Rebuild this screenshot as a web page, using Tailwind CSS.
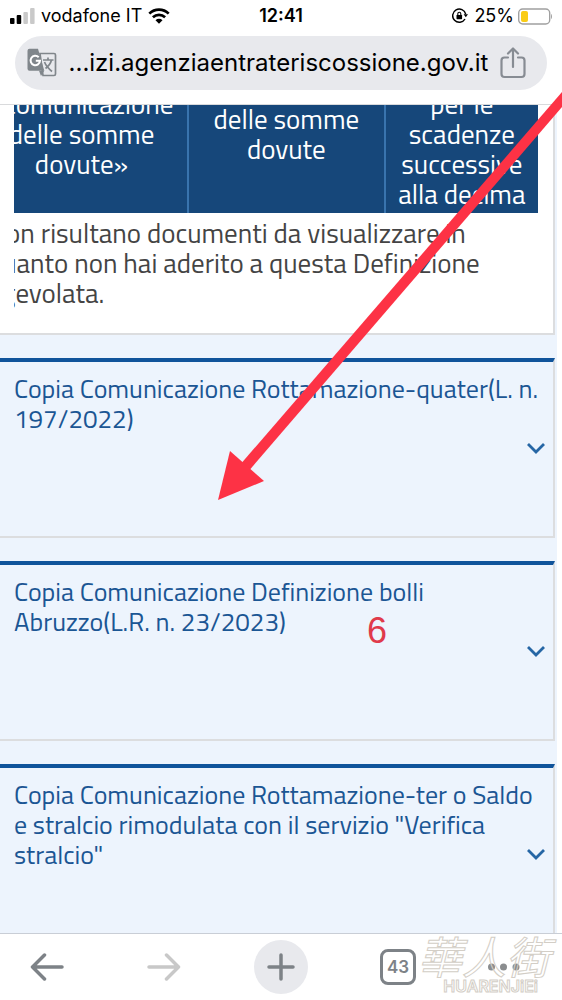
<!DOCTYPE html>
<html lang="it">
<head>
    <meta charset="UTF-8">
    <meta name="viewport" content="width=device-width, initial-scale=1.0">
    <title>Agenzia entrate-riscossione</title>
    <script src="https://cdn.jsdelivr.net/npm/@tailwindcss/browser@4"></script>
</head>
<body class="relative flex h-screen flex-col overflow-hidden bg-white font-['Inter','Liberation_Sans',sans-serif] text-black">
    <!-- Status bar and address bar -->
    <header class="shrink-0 border-b border-[#d9dadc] pb-[14px]">
        <div class="grid h-9 grid-cols-3 items-center px-[10px] pb-1 text-[18px] leading-6">
            <div class="flex items-center gap-[6px] whitespace-nowrap">
                <svg class="h-4 w-[25px] shrink-0" viewBox="0 0 25 16">
                    <rect x="0" y="10" width="4.500" height="6" rx="1"/>
                    <rect x="6.700" y="7" width="4.500" height="9" rx="1"/>
                    <rect x="13.400" y="4" width="4.500" height="12" rx="1" fill="#c9c9c9"/>
                    <rect x="20.100" y="0" width="4.500" height="16" rx="1" fill="#c9c9c9"/>
                </svg>
                <span>vodafone IT</span>
                <svg class="h-4 w-[22px] shrink-0" viewBox="0 0 22 16">
                    <path d="M1.300 5.600a14 14 0 0 1 19.400 0M4.900 9.300a9 9 0 0 1 12.200 0" fill="none" stroke="#000" stroke-width="2.700"/>
                    <path d="M11 15.700l-3.500-3.500a5 5 0 0 1 7 0z"/>
                </svg>
            </div>
            <span class="text-center font-semibold">12:41</span>
            <div class="flex items-center justify-end gap-1">
                <svg class="mr-[2px] h-4 w-4" viewBox="0 0 16 16" fill="none" stroke="#000" stroke-width="1.500">
                    <path d="M13.700 6.200a6.600 6.600 0 1 0-.7 4.800"/>
                    <path d="M11.600 6.300h4.400l-2.200 3z" fill="#000" stroke="none"/>
                    <rect x="4.500" y="7" width="5.600" height="4.200" rx=".6" fill="#000" stroke="none"/>
                    <path d="M5.800 7.500V5.700a1.500 1.500 0 0 1 3 0v1.800" stroke-width="1.100"/>
                </svg>
                <span>25%</span>
                <svg class="h-[17px] w-[34px]" viewBox="1 0 34 17">
                    <rect x="1.700" y="1" width="31" height="15" rx="4" fill="none" stroke="#a0a0a0" stroke-width="1.400"/>
                    <rect x="4" y="3" width="7" height="11" rx="2" fill="#facc15"/>
                    <path d="M34 6v5c1.300-.6 1.300-4.400 0-5" fill="#a0a0a0"/>
                </svg>
            </div>
        </div>
        <div class="mx-[15px] flex h-[54px] items-center rounded-full bg-[#e8e9ed] pr-[21px] pl-3">
            <button class="shrink-0" aria-label="Traduci">
                <svg class="size-[30px]" viewBox="0 0 30 30">
                    <path d="M13 5.500h14a1.500 1.500 0 0 1 1.500 1.500v19a1.500 1.500 0 0 1-1.500 1.500H16z" fill="#e8e9ed" stroke="#80868b" stroke-width="1.700"/>
                    <path d="M2.500.8H11l6.300 22H2.500a2 2 0 0 1-2-2v-18a2 2 0 0 1 2-2z" fill="#80868b"/>
                    <path d="M12 22.800h5.300L14 28z" fill="#80868b"/>
                    <path d="M11.700 9.200a4.700 4.700 0 1 0 1.300 3.500H8.800" fill="none" stroke="#fff" stroke-width="2"/>
                    <path d="M16 12h10.500M21 9.500V12M24.500 12c-1 4-4 7-6 8.500M17.500 14c1.500 4 4 6.500 7.500 9.500" fill="none" stroke="#80868b" stroke-width="1.700"/>
                </svg>
            </button>
            <span class="min-w-0 flex-1 text-center text-[24px] leading-8 whitespace-nowrap">...izi.agenziaentrateriscossione.gov.it</span>
            <button class="shrink-0" aria-label="Condividi">
                <svg class="h-8 w-[26px]" viewBox="0 0 26 32" fill="none" stroke="#878c93" stroke-width="2.200" stroke-linecap="round" stroke-linejoin="round">
                    <path d="M8 10.500H4.500a3 3 0 0 0-3 3V27a3 3 0 0 0 3 3h17a3 3 0 0 0 3-3V13.500a3 3 0 0 0-3-3H18M13 20V2M8 6.500L13 1.500l5 5"/>
                </svg>
            </button>
        </div>
    </header>

    <!-- Page content -->
    <main class="min-h-0 flex-1 overflow-hidden pr-[5px] font-['Titillium_Web','Noto_Sans',sans-serif]">
        <div class="flex flex-col gap-[23px] bg-[#edf4fd] pr-[2px]">
            <section class="min-h-[230px] border-r-2 border-b-2 border-[#dcdddf] bg-white pr-[15px] pl-[14px]">
                <!-- Scrolled sideways, so the left edge is cut -->
                <div class="overflow-hidden text-[27px] leading-[30px] text-[#444]">
                    <table class="-mt-4 -ml-[38px] w-[calc(100%+38px)] table-fixed bg-[#16477a] text-center text-white">
                        <thead>
                            <tr class="h-[124px] align-top">
                                <th class="w-[212px] border-r-2 border-[#3974ae] font-normal">«comunicazione<br>delle somme<br>dovute»</th>
                                <th class="w-[35%] border-r-2 border-[#3974ae] pt-[15px] font-normal">delle somme<br>dovute</th>
                                <th class="font-normal">per le<br>scadenze<br>successive<br>alla decima</th>
                            </tr>
                        </thead>
                    </table>
                    <p class="mt-[5px] -ml-[26px] whitespace-nowrap">Non risultano documenti da visualizzare in<br>quanto non hai aderito a questa Definizione<br>agevolata.</p>
                </div>
            </section>

            <section class="relative min-h-[180px] border-t-4 border-r-2 border-b-2 border-r-[#dcdddf] border-b-[#dcdddf] border-t-[#10549b] pt-3 pl-[14px]">
                <h2 class="text-[26px] leading-[30px] font-medium whitespace-nowrap text-[#1b5694]">Copia Comunicazione Rottamazione-quater(L. n.<br>197/2022)</h2>
                <button class="absolute right-[7px] bottom-[82px]" aria-label="Espandi">
                    <svg class="h-3 w-5" viewBox="0 0 20 12" fill="none" stroke="#2666a5" stroke-width="2.800"><path d="M2 2l8 8 8-8"/></svg>
                </button>
            </section>

            <section class="relative min-h-[180px] border-t-4 border-r-2 border-b-2 border-r-[#dcdddf] border-b-[#dcdddf] border-t-[#10549b] pt-3 pl-[14px]">
                <h2 class="text-[26px] leading-[30px] font-medium whitespace-nowrap text-[#1b5694]">Copia Comunicazione Definizione bolli<br>Abruzzo(L.R. n. 23/2023)</h2>
                <button class="absolute right-[7px] bottom-[82px]" aria-label="Espandi">
                    <svg class="h-3 w-5" viewBox="0 0 20 12" fill="none" stroke="#2666a5" stroke-width="2.800"><path d="M2 2l8 8 8-8"/></svg>
                </button>
            </section>

            <section class="relative min-h-[180px] border-t-4 border-r-2 border-b-2 border-r-[#dcdddf] border-b-[#dcdddf] border-t-[#10549b] pt-3 pl-[14px]">
                <h2 class="text-[26px] leading-[30px] font-medium whitespace-nowrap text-[#1b5694]">Copia Comunicazione Rottamazione-ter o Saldo<br>e stralcio rimodulata con il servizio "Verifica<br>stralcio"</h2>
                <button class="absolute right-[7px] bottom-[82px]" aria-label="Espandi">
                    <svg class="h-3 w-5" viewBox="0 0 20 12" fill="none" stroke="#2666a5" stroke-width="2.800"><path d="M2 2l8 8 8-8"/></svg>
                </button>
            </section>
        </div>
    </main>

    <!-- Browser toolbar -->
    <footer class="flex h-[67px] shrink-0 items-center justify-between border-t border-[#c9ced6] bg-white px-5">
        <button class="grid size-[54px] place-items-center" aria-label="Indietro">
            <svg class="h-7 w-[34px]" viewBox="0 0 34 28" fill="none" stroke="#7d8287" stroke-width="3.500" stroke-linecap="round" stroke-linejoin="round"><path d="M32 14H2.500M14.500 2L2.500 14l12 12"/></svg>
        </button>
        <button class="grid size-[54px] place-items-center" aria-label="Avanti">
            <svg class="h-7 w-[34px]" viewBox="0 0 34 28" fill="none" stroke="#c8c8c8" stroke-width="3.500" stroke-linecap="round" stroke-linejoin="round"><path d="M2 14h29.500M19.500 2l12 12-12 12"/></svg>
        </button>
        <button class="grid size-[54px] place-items-center rounded-full bg-[#e8e9ed]" aria-label="Nuova scheda">
            <svg class="size-7" viewBox="0 0 28 28" stroke="#7d8287" stroke-width="3.500" stroke-linecap="round"><path d="M2 14h24M14 2v24"/></svg>
        </button>
        <button class="grid size-[54px] place-items-center" aria-label="Schede aperte">
            <span class="grid size-9 place-items-center rounded-lg border-3 border-[#7d8287] text-[17px] leading-5 font-semibold text-[#7d8287]">43</span>
        </button>
        <button class="flex size-[54px] items-center" aria-label="Altro">
            <svg class="h-2 w-8" viewBox="0 0 32 8" fill="#8b8d8f"><circle cx="3.500" cy="4" r="3.500"/><circle cx="15.500" cy="4" r="3.500"/><circle cx="28" cy="4" r="3.500"/></svg>
        </button>
    </footer>

    <!-- Annotations over the page -->
    <svg class="pointer-events-none absolute top-0 right-0 h-[510px] w-[362px]" viewBox="200 0 362 510" fill="#fd3245">
        <path d="M562 92L239 466l8 7L562 107z"/>
        <path d="M218 500l12-49 34 30z"/>
    </svg>
    <span class="absolute top-[611px] right-[175px] font-['Liberation_Sans',sans-serif] text-[36px] leading-10 text-[#e03a4b]">6</span>
    <div class="pointer-events-none absolute right-[12px] bottom-[6px] text-transparent">
        <p class="font-['Noto_Sans_CJK_TC',sans-serif] text-[44px] leading-[46px] italic [-webkit-text-stroke:1px_#d3cec6]">華人街</p>
        <p class="pr-[12px] text-right text-[16px] leading-[16px] font-semibold [-webkit-text-stroke:1px_#d3cec6]">HUARENJiEi</p>
    </div>
</body>
</html>
